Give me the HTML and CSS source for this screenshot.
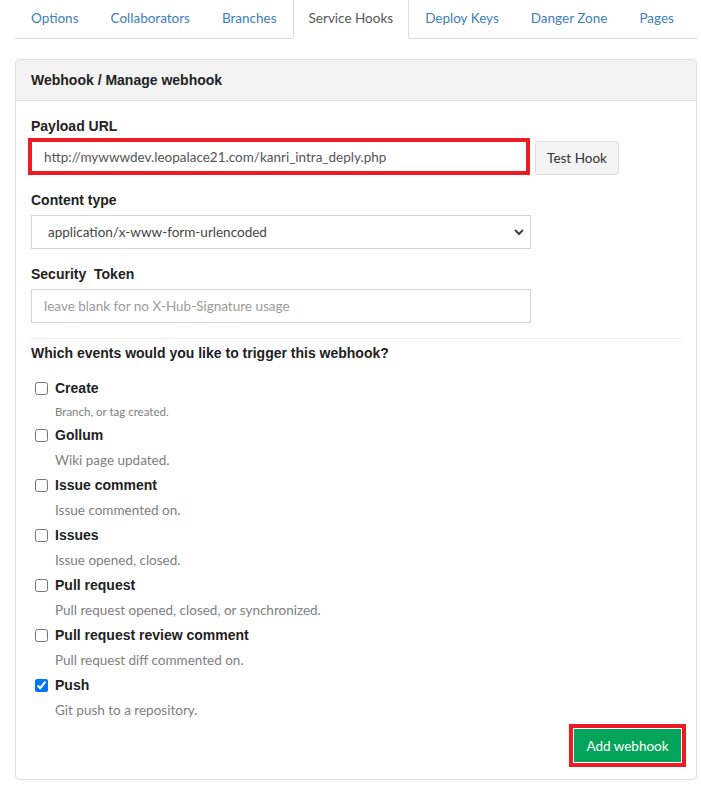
FILE: index.html
```html
<!DOCTYPE html>
<html>
<head>
<meta charset="utf-8">
<link rel="stylesheet" href="styles.css">
</head>
<body>
<div class="page">
  <ul class="tabs">
    <li class="tab">Options</li>
    <li class="tab">Collaborators</li>
    <li class="tab">Branches</li>
    <li class="tab active">Service Hooks</li>
    <li class="tab">Deploy Keys</li>
    <li class="tab">Danger Zone</li>
    <li class="tab">Pages</li>
  </ul>
  <div class="panel">
    <div class="panel-head">Webhook / Manage webhook</div>
    <div class="panel-body">
      <div class="label">Payload URL</div>
      <div class="url-row">
        <div class="mark">
          <input class="url-input" type="text" value="http://mywwwdev.leopalace21.com/kanri_intra_deply.php">
        </div>
        <button class="btn-test">Test Hook</button>
      </div>
      <div class="label gap">Content type</div>
      <select class="select">
        <option>application/x-www-form-urlencoded</option>
      </select>
      <div class="label gap">Security&nbsp; Token</div>
      <input class="field" type="text" placeholder="leave blank for no X-Hub-Signature usage">
      <hr class="divider">
      <div class="label">Which events would you like to trigger this webhook?</div>
      <div class="events">
        <div class="event">
          <label class="ev-title"><input type="checkbox" class="cb">Create</label>
          <div class="ev-desc small">Branch, or tag created.</div>
        </div>
        <div class="event">
          <label class="ev-title"><input type="checkbox" class="cb">Gollum</label>
          <div class="ev-desc">Wiki page updated.</div>
        </div>
        <div class="event">
          <label class="ev-title"><input type="checkbox" class="cb">Issue comment</label>
          <div class="ev-desc">Issue commented on.</div>
        </div>
        <div class="event">
          <label class="ev-title"><input type="checkbox" class="cb">Issues</label>
          <div class="ev-desc">Issue opened, closed.</div>
        </div>
        <div class="event">
          <label class="ev-title"><input type="checkbox" class="cb">Pull request</label>
          <div class="ev-desc">Pull request opened, closed, or synchronized.</div>
        </div>
        <div class="event">
          <label class="ev-title"><input type="checkbox" class="cb">Pull request review comment</label>
          <div class="ev-desc">Pull request diff commented on.</div>
        </div>
        <div class="event">
          <label class="ev-title"><input type="checkbox" class="cb" checked>Push</label>
          <div class="ev-desc">Git push to a repository.</div>
        </div>
      </div>
      <div class="actions">
        <button class="btn-add">Add webhook</button>
      </div>
    </div>
  </div>
</div>
</body>
</html>
```
FILE: styles.css
```css
* { box-sizing: border-box; }
html, body { margin: 0; padding: 0; background: #fff; }
body { font-family: "Lato", "Liberation Sans", sans-serif; font-size: 13.5px; color: #333; }
.page { margin: 0 4px 0 15px; }

.tabs {
  list-style: none;
  margin: 0;
  padding: 0;
  display: flex;
  height: 39px;
  border-bottom: 1px solid #ddd;
}
.tab {
  flex: none;
  white-space: nowrap;
  padding: 0 15px;
  height: 38px;
  line-height: 37px;
  font-size: 13.5px;
  color: #3d7ec1;
  border: 1px solid transparent;
  border-top: none;
}
.tab.active {
  color: #555;
  background: #fff;
  border-color: #ddd;
  height: 39px;
  border-bottom-color: #fff;
}

.panel {
  margin-top: 20px;
  border: 1px solid #ddd;
  border-radius: 4px;
  width: 682px;
}
.panel-head {
  height: 41px;
  padding: 0 15px;
  line-height: 40px;
  background: #f3f3f3;
  border-bottom: 1px solid #ddd;
  border-radius: 4px 4px 0 0;
  font-family: "Liberation Sans", Arial, sans-serif;
  font-weight: bold;
  font-size: 14px;
  color: #222;
}
.panel-body { padding: 15px 15px 17px; }

.label {
  font-family: "Liberation Sans", Arial, sans-serif;
  font-weight: bold;
  font-size: 14px;
  line-height: 20px;
  color: #222;
}
.label.gap { margin-top: 15px; margin-bottom: 5px; }

.url-row {
  display: flex;
  align-items: flex-start;
  margin-top: 2px;
  margin-left: -3px;
}
.mark {
  width: 502px;
  height: 37px;
  border: 4px solid #ed1c24;
}
.url-input {
  width: 100%;
  height: 100%;
  border: none;
  padding: 0 12px;
  font-family: "Lato", sans-serif;
  font-size: 13.5px;
  color: #555;
  outline: none;
}
.btn-test {
  margin-left: 5px;
  margin-top: 3px;
  width: 84px;
  height: 34px;
  background: #f3f3f3;
  border: 1px solid #ddd;
  border-radius: 3px;
  font-family: "Lato", sans-serif;
  font-size: 13.5px;
  color: #333;
  padding: 0;
}

.select {
  display: block;
  width: 500px;
  height: 34px;
  border: 1px solid #d3d3dc;
  border-radius: 0;
  padding: 0 16px;
  font-family: "Lato", sans-serif;
  font-size: 13.5px;
  color: #444;
  appearance: none;
  -webkit-appearance: none;
  background: #fff url("data:image/svg+xml;utf8,<svg xmlns='http://www.w3.org/2000/svg' width='10' height='8' viewBox='0 0 10 8'><path d='M1 2 L5 6 L9 2' fill='none' stroke='%23444' stroke-width='2'/></svg>") no-repeat right 6px center;
}
.field {
  display: block;
  width: 500px;
  height: 34px;
  border: 1px solid #d3d3dc;
  padding: 0 12px;
  font-family: "Lato", sans-serif;
  font-size: 13.5px;
  color: #555;
}
.field::placeholder { color: #9a9a9a; }

.divider {
  border: none;
  border-top: 1px solid #eee;
  margin: 15px 0 4px;
}

.events { margin-top: 15px; }
.event { margin-bottom: 5px; }
.ev-title {
  display: flex;
  align-items: center;
  height: 20px;
  font-family: "Liberation Sans", Arial, sans-serif;
  font-weight: bold;
  font-size: 14px;
  color: #222;
}
.cb {
  width: 13px;
  height: 13px;
  margin: 0 7px 0 4px;
}
.ev-desc {
  margin-top: 5px;
  padding-left: 24px;
  line-height: 20px;
  font-size: 13.5px;
  color: #808080;
}
.ev-desc.small { font-size: 11.5px; line-height: 17px; }

.actions {
  display: flex;
  justify-content: flex-end;
  margin-top: 9px;
}
.btn-add {
  width: 107px;
  height: 33px;
  background: #04a55a;
  color: #fff;
  border: 1px solid #04a55a;
  border-radius: 0;
  font-family: "Lato", sans-serif;
  font-size: 13.5px;
  outline: 4px solid #ed1c24;
  outline-offset: 1px;
  padding: 0;
}
```
